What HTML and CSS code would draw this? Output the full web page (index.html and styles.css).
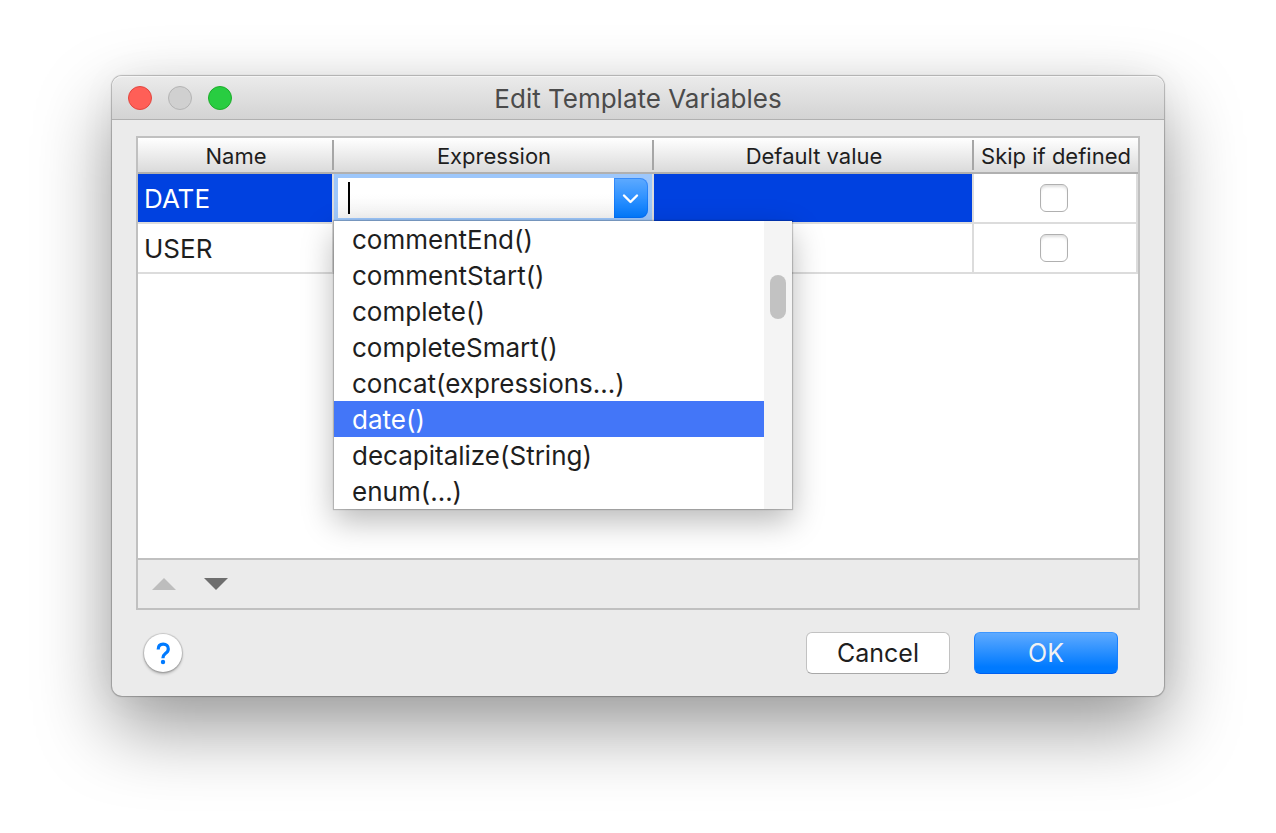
FILE: index.html
```html
<!DOCTYPE html>
<html lang="en">
<head>
<meta charset="utf-8">
<title>Edit Template Variables</title>
<link rel="stylesheet" href="styles.css">
</head>
<body>
<main class="dialog" role="dialog" aria-labelledby="dialog-title">
  <header class="titlebar">
    <div class="lights">
      <button class="light light-close" aria-label="Close"></button>
      <button class="light light-minimize" aria-label="Minimize" disabled></button>
      <button class="light light-zoom" aria-label="Zoom"></button>
    </div>
    <h1 class="title" id="dialog-title">Edit Template Variables</h1>
  </header>
  <div class="content">
    <section class="panel">
      <div class="table-area">
        <table class="variables">
          <colgroup>
            <col class="col-name"><col class="col-expression"><col class="col-default"><col class="col-skip">
          </colgroup>
          <thead>
            <tr><th scope="col">Name</th><th scope="col">Expression</th><th scope="col">Default value</th><th scope="col">Skip if defined</th></tr>
          </thead>
          <tbody>
            <tr class="selected">
              <td class="text-cell">DATE</td>
              <td class="editor-cell">
                <div class="combo">
                  <input class="combo-input" type="text" role="combobox" aria-label="Expression" aria-expanded="true" aria-controls="functions">
                  <button class="combo-button" aria-label="Show functions">
                    <svg width="34" height="40" viewBox="0 0 34 40" aria-hidden="true"><path d="M10 17.500 16.500 24l6.500-6.500" fill="none" stroke="#fff" stroke-width="2.400" stroke-linecap="round" stroke-linejoin="round"/></svg>
                  </button>
                  <div class="popup">
                    <ul class="options" id="functions" role="listbox" aria-label="Functions">
                      <li class="option" role="option">commentEnd()</li>
                      <li class="option" role="option">commentStart()</li>
                      <li class="option" role="option">complete()</li>
                      <li class="option" role="option">completeSmart()</li>
                      <li class="option" role="option">concat(expressions...)</li>
                      <li class="option option-active" role="option" aria-selected="true">date()</li>
                      <li class="option" role="option">decapitalize(String)</li>
                      <li class="option" role="option">enum(...)</li>
                    </ul>
                    <div class="scrollbar"><div class="thumb"></div></div>
                  </div>
                </div>
              </td>
              <td class="text-cell"></td>
              <td class="check-cell"><input class="check" type="checkbox" aria-label="Skip DATE if defined"></td>
            </tr>
            <tr>
              <td class="text-cell">USER</td>
              <td class="text-cell"></td>
              <td class="text-cell"></td>
              <td class="check-cell"><input class="check" type="checkbox" aria-label="Skip USER if defined"></td>
            </tr>
          </tbody>
        </table>
      </div>
      <div class="toolbar">
        <button class="move" aria-label="Move up" disabled><svg width="24" height="12" viewBox="0 0 24 12" aria-hidden="true"><path d="M0 12 12 0l12 12z" fill="#bdbdbd"/></svg></button>
        <button class="move" aria-label="Move down"><svg width="24" height="12" viewBox="0 0 24 12" aria-hidden="true"><path d="M0 0h24L12 12z" fill="#6e6e6e"/></svg></button>
      </div>
    </section>
    <footer class="actions">
      <button class="help" aria-label="Help"><svg width="38" height="38" viewBox="0 0 38 38" aria-hidden="true"><path d="M14.200 15.500c0-3.500 2-5.300 5-5.300 3.100 0 5.100 1.900 5.100 4.700 0 2-1.100 3.300-2.900 4.600-1.700 1.300-2.500 2.200-2.500 4.700" fill="none" stroke="#007aff" stroke-width="3.200"/><circle cx="19" cy="28" r="2.200" fill="#007aff"/></svg></button>
      <button class="button">Cancel</button>
      <button class="button button-primary">OK</button>
    </footer>
  </div>
</main>
</body>
</html>
```
FILE: styles.css
```css
* {
  box-sizing: border-box;
}

body {
  min-height: 100vh;
  margin: 0;
  padding: 76px 112px;
  background: #fff;
  color: #1e1e1e;
  font: 25px/36px Inter, "Liberation Sans", sans-serif;
}

button,
input {
  margin: 0;
  padding: 0;
  border: 0;
  font: inherit;
  color: inherit;
}

svg {
  display: block;
}

.dialog {
  border-radius: 10px;
  background: #ebebeb;
  box-shadow: 0 0 1px 1px rgba(0, 0, 0, 0.25), 0 32px 76px rgba(0, 0, 0, 0.4), 0 0 40px rgba(0, 0, 0, 0.04);
}

.titlebar {
  display: grid;
  grid-template-columns: 1fr auto 1fr;
  align-items: center;
  height: 44px;
  padding: 0 16px;
  border-bottom: 1px solid #b0b0b0;
  border-radius: 10px 10px 0 0;
  background: linear-gradient(#ebebeb, #d3d3d3);
  box-shadow: inset 0 1px #f5f5f5;
}

.lights {
  display: flex;
  gap: 16px;
}

.light {
  width: 24px;
  height: 24px;
  border: 1px solid;
  border-radius: 50%;
}

.light-close {
  border-color: #e2463f;
  background: #ff5f57;
}

.light-minimize {
  border-color: #b4b4b4;
  background: #d0d0d0;
}

.light-zoom {
  border-color: #1dad2b;
  background: #28cd41;
}

.title {
  margin: 0;
  padding-top: 2px;
  color: #4b4b4b;
  font-size: 26px;
  font-weight: 400;
  line-height: 36px;
}

.content {
  padding: 16px 24px 22px;
}

.panel {
  border: 2px solid #c0c0c0;
}

.table-area {
  min-height: 420px;
  background: #fff;
}

.variables {
  width: 100%;
  table-layout: fixed;
  border-collapse: separate;
  border-spacing: 0;
}

.col-name {
  width: 196px;
}

.col-skip {
  width: 164px;
}

.variables th {
  height: 36px;
  padding: 2px 0 0;
  border-bottom: 2px solid #b0b0b0;
  background:
    linear-gradient(#a6a6a6, #a6a6a6) right 2px / 2px 30px no-repeat,
    linear-gradient(#fff, #dadada);
  font-size: 22px;
  font-weight: 400;
  line-height: 32px;
  white-space: nowrap;
}

.variables th:last-child {
  background: linear-gradient(#fff, #dadada);
}

.variables td {
  height: 50px;
  padding: 0;
  border-right: 2px solid #dcdcdc;
  border-bottom: 2px solid #dcdcdc;
  font-size: 26px;
}

.variables .text-cell {
  padding: 2px 0 0 6px;
}

.selected .text-cell {
  background: #0041e0;
  background-clip: padding-box;
  color: #fff;
}

.variables .check-cell {
  padding-right: 2px;
}

.check {
  display: block;
  width: 28px;
  height: 28px;
  margin: 0 auto;
  border: 1px solid #b0b0b0;
  border-radius: 6px;
  background: #fff;
  box-shadow: inset 0 3px 3px -1px #dedede;
  appearance: none;
}

.combo {
  position: relative;
  display: flex;
  height: 48px;
  padding: 4px;
  background: #9dc7fb;
}

.combo::before {
  content: "";
  position: absolute;
  top: 8px;
  left: 14px;
  width: 2px;
  height: 32px;
  background: #000;
}

.combo-input {
  flex: 1;
  min-width: 0;
  padding: 0 10px;
  background: linear-gradient(#fff 40%, #f5f5f5);
  outline: 0;
}

.combo-button {
  width: 34px;
  border-radius: 0 8px 8px 0;
  background: linear-gradient(#5eaaff, #007aff);
  box-shadow: inset 0 0 0 1px rgba(0, 96, 240, 0.4);
}

.popup {
  position: absolute;
  z-index: 1;
  top: 47px;
  left: 0;
  display: flex;
  width: 458px;
  background: #fff;
  box-shadow: 0 0 1px 1px rgba(0, 0, 0, 0.2), 0 12px 30px rgba(0, 0, 0, 0.28);
}

.options {
  flex: 1;
  margin: 0;
  padding: 0;
  list-style: none;
}

.option {
  height: 36px;
  padding: 0 18px;
  line-height: 38px;
}

.option-active {
  background: #4376f8;
  color: #fff;
}

.scrollbar {
  width: 28px;
  padding: 54px 6px;
  background: #f4f4f4;
}

.thumb {
  height: 44px;
  border-radius: 8px;
  background: #c2c2c2;
}

.toolbar {
  display: flex;
  align-items: center;
  gap: 28px;
  height: 50px;
  padding: 0 14px;
  border-top: 2px solid #c0c0c0;
}

.move {
  background: none;
}

.actions {
  display: flex;
  align-items: center;
  gap: 24px;
  padding: 22px 22px 0 8px;
}

.help {
  width: 38px;
  height: 38px;
  margin-right: auto;
  border-radius: 50%;
  background: #fff;
  box-shadow: 0 0 1px 1px rgba(0, 0, 0, 0.15), 0 2px 3px rgba(0, 0, 0, 0.25);
}

.button {
  width: 144px;
  height: 42px;
  border: 1px solid #c2c2c2;
  border-bottom-color: #a8a8a8;
  border-radius: 6px;
  background: #fff;
}

.button-primary {
  border-color: #3d97ff #1a80ff #0060f0;
  background: linear-gradient(#5eaaff, #007aff 85%);
  color: #f2f2f2;
}
```
